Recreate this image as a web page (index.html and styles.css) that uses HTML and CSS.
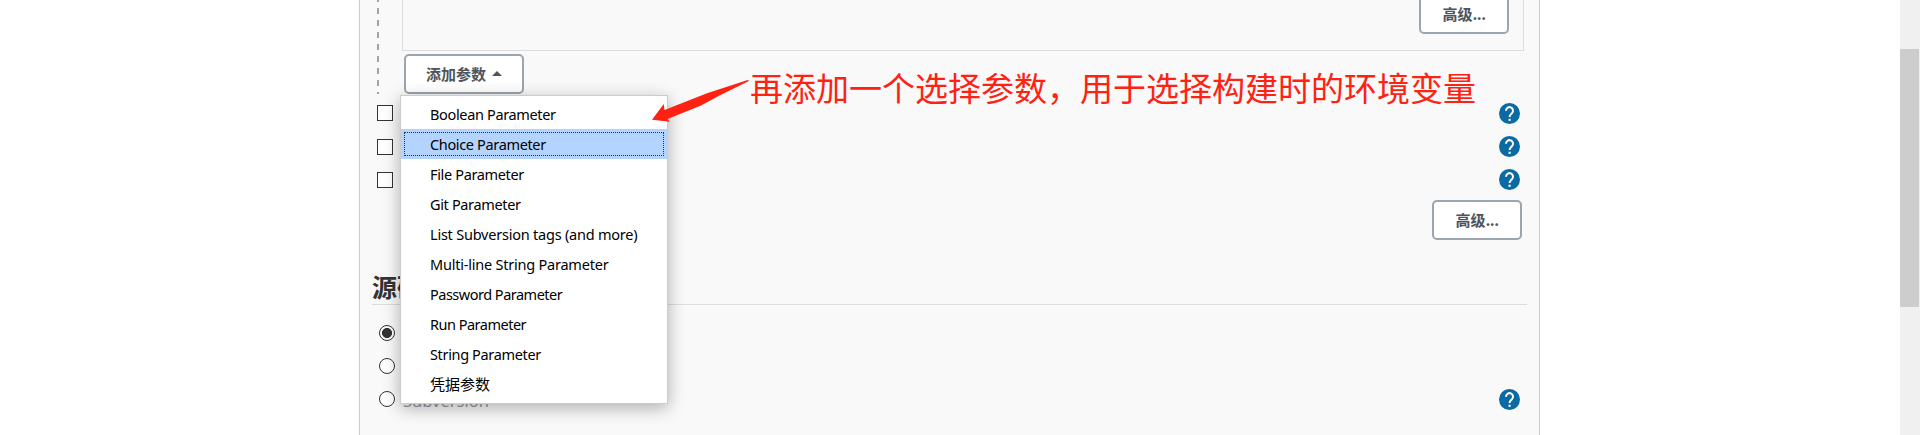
FILE: index.html
```
<!DOCTYPE html>
<html lang="zh-CN">
<head>
<meta charset="utf-8">
<title>参数化构建</title>
<link rel="stylesheet" href="styles.css">
</head>
<body>
<svg class="defs" width="0" height="0"><symbol id="help" viewBox="0 0 24 24"><path d="M12 0a12 12 0 1 0 0 24a12 12 0 0 0 0-24z" fill="#0b6aa2"/><path d="M8 8.800a4 4 0 1 1 6.800 2.800C13.300 13 12.100 13.500 12.100 16" fill="none" stroke="#fff" stroke-width="2.300"/><path d="M10.900 18h2.400v2.400h-2.400z" fill="#fff"/></symbol></svg>
<main class="panel">
  <section class="params">
    <div class="param-box"><button class="btn btn-top">高级<span class="dots">...</span></button></div>
    <div class="dropdown">
      <button class="btn btn-add">添加参数<i class="caret"></i></button>
      <ul class="menu">
        <li>Boolean Parameter</li>
        <li class="active">Choice Parameter</li>
        <li>File Parameter</li>
        <li>Git Parameter</li>
        <li class="wide">List Subversion tags (and more)</li>
        <li class="wide">Multi-line String Parameter</li>
        <li class="narrow">Password Parameter</li>
        <li class="narrow">Run Parameter</li>
        <li>String Parameter</li>
        <li class="cjk">凭据参数</li>
      </ul>
    </div>
  </section>
  <section class="options">
    <div class="row"><i class="check"></i><svg class="help"><use href="#help"/></svg></div>
    <div class="row"><i class="check"></i><svg class="help"><use href="#help"/></svg></div>
    <div class="row"><i class="check"></i><svg class="help"><use href="#help"/></svg></div>
  </section>
  <div class="actions"><button class="btn">高级<span class="dots">...</span></button></div>
  <h2 class="title">源码管理</h2>
  <section class="scm">
    <div class="row"><i class="radio on"></i></div>
    <div class="row"><i class="radio"></i></div>
    <div class="row"><i class="radio"></i><span class="label">Subversion</span><svg class="help"><use href="#help"/></svg></div>
  </section>
</main>
<aside class="scrollbar"><div class="thumb"></div></aside>
<div class="note">再添加一个选择参数，用于选择构建时的环境变量</div>
<svg class="arrow" width="100" height="46" viewBox="0 0 100 46"><path d="M97.500 .8L56 14.200L13.500 31L12.700 25L1 40.700L19 42.800L16.500 40L50 26.500L69 16.200L97.500 2.200Z" fill="#ff2213"/></svg>
</body>
</html>
```
FILE: styles.css
```
* { box-sizing: border-box; }
body {
  margin: 0;
  height: 435px;
  display: flex;
  justify-content: space-between;
  overflow: hidden;
  background: #fff;
  color: #333;
  font-family: "Noto Sans", "Noto Sans CJK SC", sans-serif;
}
.defs { position: absolute; }
.panel {
  width: 1181px;
  height: 435px;
  margin-left: 359px;
  overflow: hidden;
  background: #f9f9f9;
  border: solid #ccc;
  border-width: 0 1px;
}
.params {
  height: 94px;
  margin-left: 17px;
  padding-left: 25px;
  background: repeating-linear-gradient(to bottom, #a3a3a3 0 2px, transparent 2px 8px, #a3a3a3 8px 12px) 0 0 / 2px 94px no-repeat;
}
.param-box {
  width: 1122px;
  height: 51px;
  display: flex;
  justify-content: flex-end;
  padding-right: 14px;
  border: solid #ddd;
  border-width: 0 1px 1px;
}
.btn {
  width: 90px;
  height: 40px;
  padding: 0 0 2px;
  background: #fff;
  color: #4d545d;
  border: 2px solid #9aa5af;
  border-radius: 5px;
  font: 700 15px "Noto Sans CJK SC", sans-serif;
}
.dots { letter-spacing: -.6px; }
.btn-top { margin-top: -6px; }
.dropdown { position: relative; padding: 3px 0 0 2px; }
.btn-add {
  width: 120px;
  display: flex;
  align-items: center;
  justify-content: center;
  gap: 6px;
}
.caret {
  border: solid transparent;
  border-width: 0 5px 5px;
  border-bottom-color: #4d545d;
}
.menu {
  position: absolute;
  z-index: 2;
  left: -2px;
  top: 44px;
  width: 268px;
  margin: 0;
  padding: 3px 0 4px;
  list-style: none;
  background: #fff;
  border: 1px solid #ccc;
  box-shadow: 0 4px 16px rgba(0, 0, 0, .3);
  color: #000;
  font-size: 14.5px;
  letter-spacing: -.35px;
}
.menu li {
  height: 30px;
  padding-left: 29px;
  line-height: 30px;
  white-space: nowrap;
}
.menu .wide { letter-spacing: -.22px; }
.menu .narrow { letter-spacing: -.5px; }
.menu .active {
  background: #b3d4ff;
  outline: 1px dotted #333;
  outline-offset: -4px;
}
.menu .cjk { font-size: 15px; letter-spacing: 0; }
.options { padding-top: 3px; }
.row {
  height: 33px;
  display: flex;
  align-items: flex-start;
  padding-right: 19px;
}
.check {
  width: 16px;
  height: 16px;
  margin: 8px 0 0 17px;
  background: #fff;
  border: 1px solid #333;
}
.row + .row .check { margin-top: 9px; }
.help { width: 21px; height: 21px; margin: 6px 0 0 auto; }
.actions {
  display: flex;
  justify-content: flex-end;
  padding: 4px 17px 0 0;
}
.title {
  height: 35px;
  margin: 30px 12px 0;
  border-bottom: 1px solid #ddd;
  font: 700 25px/32px "Noto Sans CJK SC", sans-serif;
}
.scm { padding-top: 12px; }
.radio {
  width: 16px;
  height: 16px;
  margin: 8px 0 0 19px;
  border: 1px solid #333;
  border-radius: 50%;
  background: #fff;
}
.radio.on { background: radial-gradient(circle, #333 0 4.700px, #fff 5.300px); }
.label { margin-left: 8px; color: #999; font-size: 16.5px; line-height: 36px; }
.scrollbar {
  width: 20px;
  height: 435px;
  padding-top: 49px;
  background: #f0f0f0;
}
.thumb { width: 19px; height: 258px; background: #cdcdcd; }
.note {
  position: absolute;
  z-index: 3;
  left: 750px;
  top: 63px;
  color: #ff2213;
  font: 33px/48px "Noto Sans CJK SC", sans-serif;
  white-space: nowrap;
}
.arrow { position: absolute; z-index: 3; left: 651px; top: 79px; }
```
